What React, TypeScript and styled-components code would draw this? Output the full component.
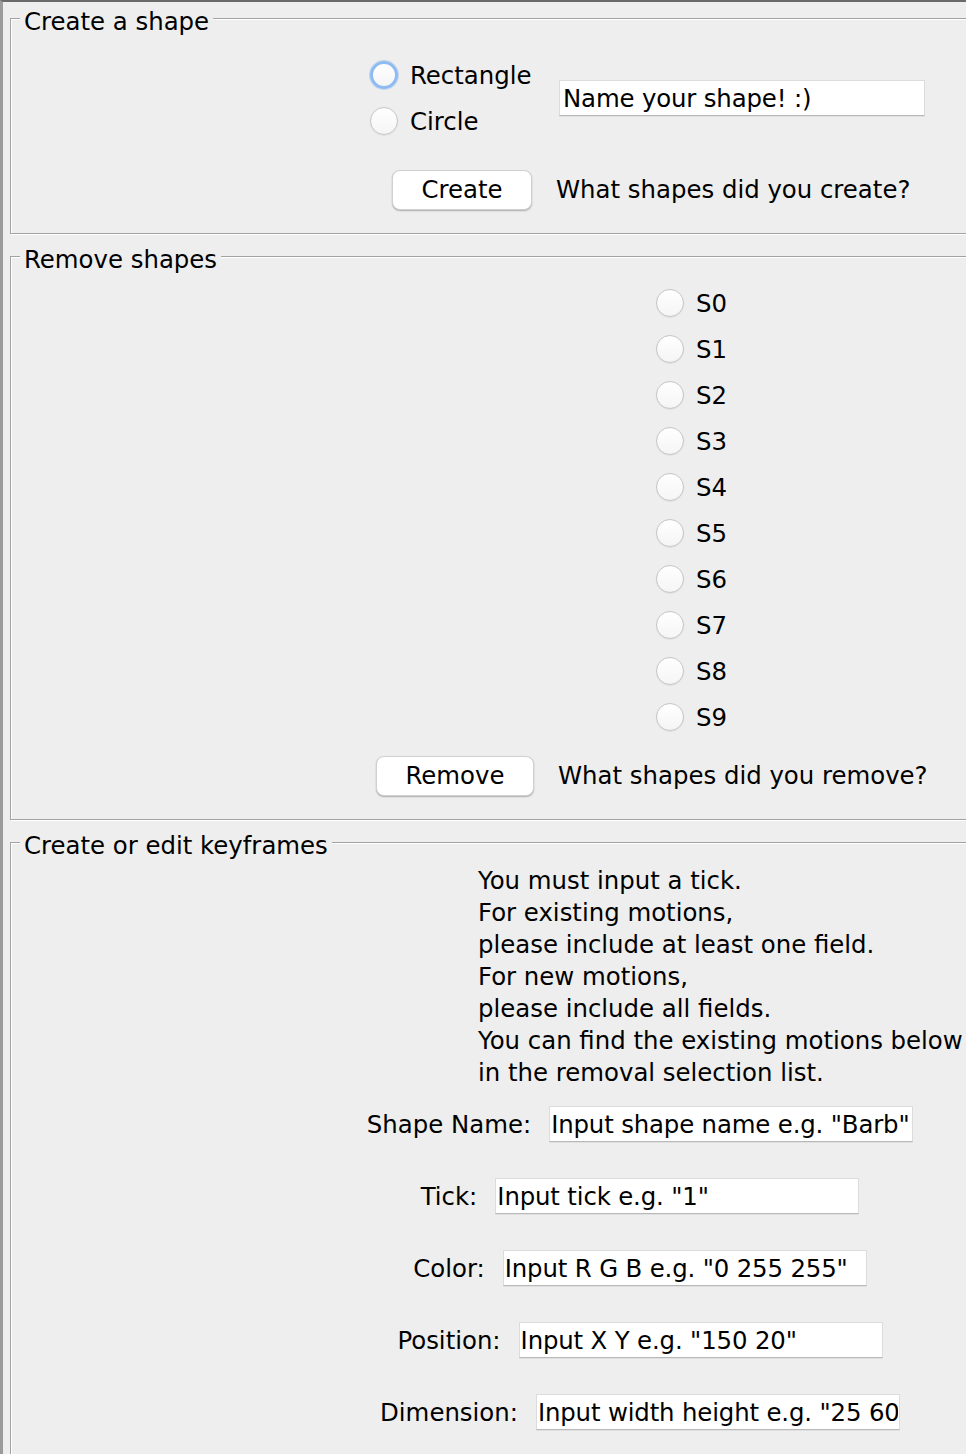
import React from "react";
import styled, { createGlobalStyle, css } from "styled-components";

const FONT = `"DejaVu Sans", "Liberation Sans", sans-serif`;

const Global = createGlobalStyle`
  html, body {
    margin: 0;
    padding: 0;
    overflow: hidden;
    background: #eeeeee;
  }
  body {
    font-family: ${FONT};
    font-size: 24.4px;
    color: #000;
  }
`;

const Window = styled.div`
  width: 1270px;
  box-sizing: border-box;
  border-top: 2px solid #6a6a6a;
  border-left: 3px solid #9b9b9b;
  padding-left: 7px;
  background: #eeeeee;
  display: flex;
  flex-direction: column;
  gap: 6px;
`;

const Panel = styled.fieldset<{ $pt: number; $pb: number }>`
  margin: 0;
  width: 1260px;
  min-width: 0;
  box-sizing: border-box;
  border: 1px solid #a2a2a2;
  box-shadow: inset 1px 1px 0 #ffffff, 1px 1px 0 #ffffff;
  padding: ${(p) => p.$pt}px 0 ${(p) => p.$pb}px 0;
`;

const Title = styled.legend`
  margin-left: 9px;
  padding: 7px 4px 0 4px;
  line-height: 26px;
  background: #eeeeee;
  font-size: 24.4px;
  white-space: nowrap;
`;

const CreateGrid = styled.div`
  display: grid;
  grid-template-columns: 162px auto;
  column-gap: 27px;
  row-gap: 26px;
  padding-left: 359px;
  align-items: center;
`;

const RadioStack = styled.div`
  display: flex;
  flex-direction: column;
`;

const RadioRow = styled.label`
  display: flex;
  align-items: center;
  gap: 12px;
  height: 46px;
  line-height: 32px;
  white-space: nowrap;
`;

const RadioText = styled.span`
  padding-top: 2px;
`;

const Dot = styled.span<{ $focused?: boolean }>`
  flex: none;
  width: 28px;
  height: 28px;
  box-sizing: border-box;
  border-radius: 50%;
  background: linear-gradient(#ffffff, #f5f5f5);
  border: 1px solid #c6c6c6;
  box-shadow: 0 0.5px 1px rgba(0, 0, 0, 0.1);
  ${(p) =>
    p.$focused &&
    css`
      border: 3px solid #8ebbf1;
      box-shadow: 0 0 0 1px rgba(140, 185, 240, 0.45);
    `}
`;

const Field = styled.input<{ $w: number; $inset: number }>`
  width: ${(p) => p.$w}px;
  height: 36px;
  box-sizing: border-box;
  margin: 0;
  padding: 1px ${(p) => p.$inset}px 0 ${(p) => p.$inset}px;
  border: 1px solid #dcdcdc;
  border-bottom-color: #b8b8b8;
  box-shadow: 0 1px 0.5px rgba(0, 0, 0, 0.06);
  background: #ffffff;
  color: #000;
  font-family: ${FONT};
  font-size: 24.4px;
  letter-spacing: -0.15px;
  outline: none;
`;

const Button = styled.button<{ $w: number }>`
  width: ${(p) => p.$w}px;
  height: 40px;
  margin: 0;
  padding: 0;
  border: 1px solid #d0d0d0;
  border-radius: 8px;
  background: #ffffff;
  box-shadow: 0 1px 1.5px rgba(0, 0, 0, 0.28);
  font-family: ${FONT};
  font-size: 24.4px;
  color: #000;
  line-height: 32px;
`;

const EndButton = styled(Button)`
  justify-self: end;
`;

const Caption = styled.span<{ $shift?: number }>`
  line-height: 32px;
  white-space: nowrap;
  margin-left: ${(p) => p.$shift ?? 0}px;
`;

const RemoveList = styled.div`
  display: flex;
  flex-direction: column;
  padding-left: 645px;
`;

const ActionRow = styled.div<{ $pl: number; $mt: number }>`
  display: flex;
  align-items: center;
  gap: 24px;
  padding-left: ${(p) => p.$pl}px;
  margin-top: ${(p) => p.$mt}px;
`;

const KeyframeBody = styled.div`
  display: flex;
  flex-direction: column;
  align-items: center;
`;

const Notes = styled.div`
  align-self: flex-start;
  margin-left: 467px;
  line-height: 32px;
  white-space: pre;
`;

const FormRows = styled.div`
  display: flex;
  flex-direction: column;
  align-items: center;
  gap: 36px;
  margin-top: 17px;
`;

const FormRow = styled.div`
  display: flex;
  align-items: center;
  gap: 18px;
  height: 36px;
`;

const FieldLabel = styled.span`
  line-height: 32px;
  padding-top: 2px;
  white-space: nowrap;
`;

const shapes = ["S0", "S1", "S2", "S3", "S4", "S5", "S6", "S7", "S8", "S9"];

const notes = [
  "You must input a tick.",
  "For existing motions,",
  "please include at least one field.",
  "For new motions,",
  "please include all fields.",
  "You can find the existing motions below",
  "in the removal selection list.",
].join("\n");

const formFields = [
  { label: "Shape Name:", value: 'Input shape name e.g. "Barb"' },
  { label: "Tick:", value: 'Input tick e.g. "1"' },
  { label: "Color:", value: 'Input R G B e.g. "0 255 255"' },
  { label: "Position:", value: 'Input X Y e.g. "150 20"' },
  { label: "Dimension:", value: 'Input width height e.g. "25 60"' },
];

export default function App() {
  return (
    <>
      <Global />
      <Window>
        <Panel $pt={17} $pb={23}>
          <Title>Create a shape</Title>
          <CreateGrid>
            <RadioStack>
              <RadioRow>
                <Dot $focused />
                <RadioText>Rectangle</RadioText>
              </RadioRow>
              <RadioRow>
                <Dot />
                <RadioText>Circle</RadioText>
              </RadioRow>
            </RadioStack>
            <Field $w={366} $inset={3} value="Name your shape! :)" readOnly />
            <EndButton $w={140}>Create</EndButton>
            <Caption $shift={-3}>What shapes did you create?</Caption>
          </CreateGrid>
        </Panel>

        <Panel $pt={7} $pb={23}>
          <Title>Remove shapes</Title>
          <RemoveList>
            {shapes.map((s) => (
              <RadioRow key={s}>
                <Dot />
                <RadioText>{s}</RadioText>
              </RadioRow>
            ))}
          </RemoveList>
          <ActionRow $pl={365} $mt={16}>
            <Button $w={158}>Remove</Button>
            <Caption>What shapes did you remove?</Caption>
          </ActionRow>
        </Panel>

        <Panel $pt={6} $pb={80}>
          <Title>Create or edit keyframes</Title>
          <KeyframeBody>
            <Notes>{notes}</Notes>
            <FormRows>
              {formFields.map((f) => (
                <FormRow key={f.label}>
                  <FieldLabel>{f.label}</FieldLabel>
                  <Field $w={364} $inset={1} value={f.value} readOnly />
                </FormRow>
              ))}
            </FormRows>
          </KeyframeBody>
        </Panel>
      </Window>
    </>
  );
}
